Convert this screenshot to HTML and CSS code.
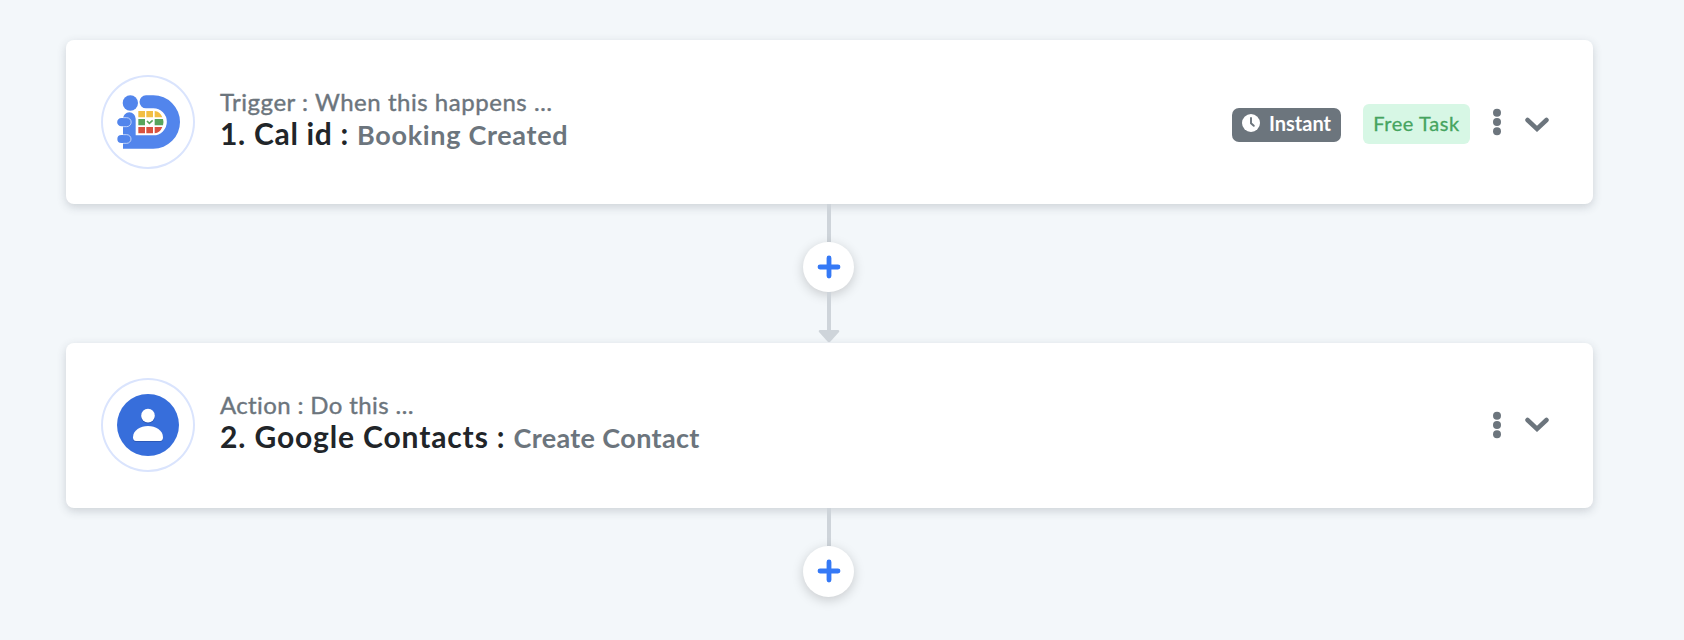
FILE: index.html
```html
<!DOCTYPE html>
<html lang="en">

<head>
    <meta charset="UTF-8">
    <meta name="viewport" content="width=device-width, initial-scale=1.0">
    <title>Workflow</title>
    <link rel="stylesheet" href="styles.css">
</head>

<body>
    <div class="flow">
        <div class="card">
            <div class="app_icon">
                <svg viewBox="33 29 282 282">
                    <path fill="#5285ec" d="M168 90H190A80 80 0 0 1 190 250H99V160A19 19 0 0 1 137 160V210H190A40 40 0 0 0 190 129H168A19.500 19.500 0 0 1 168 90Z" />
                    <circle fill="#5285ec" cx="121" cy="113" r="23" />
                    <g fill="#5285ec" stroke="#d5e1fb" stroke-width="2.500">
                        <path d="M99 157H110A13.500 13.500 0 0 1 110 184H99" />
                        <path d="M99 208H110A13 13 0 0 1 110 234H99" />
                    </g>
                    <path fill="#5285ec" d="M100 158H94A12.500 12.500 0 0 0 94 183H100ZM100 209H94A12 12 0 0 0 94 233H100Z" />
                    <path fill="#f2be42" d="M145 137H165V156H145ZM169 137H189V156H169ZM194 137Q210 138 217 156H194Z" />
                    <path fill="#58a55c" d="M145 161H165V180H145ZM194 161H219Q222 170 219 180H194Z" />
                    <path fill="#d95140" d="M145 185H165V204H145ZM169 185H189V204H169ZM194 185H217Q210 202 194 204Z" />
                    <path fill="none" stroke="#58a55c" stroke-width="5" d="M171 167L178 174L188 165" />
                </svg>
            </div>
            <div class="info">
                <div class="label">Trigger : When this happens …</div>
                <div class="title title_trigger"><b>1. Cal id :</b><span>Booking Created</span></div>
            </div>
            <div class="tools">
                <span class="badge badge_instant">
                    <svg width="18" height="18" viewBox="0 0 18 18">
                        <circle cx="9" cy="9" r="9" fill="#fff" />
                        <path d="M9 4V9.300L11.800 11.800" fill="none" stroke="#6c757d" stroke-width="1.900" stroke-linecap="round" />
                    </svg>
                    Instant
                </span>
                <span class="badge badge_free">Free Task</span>
                <svg class="dots" width="8" height="28" viewBox="0 0 8 28">
                    <circle cx="4" cy="4.800" r="4" />
                    <circle cx="4" cy="14" r="4" />
                    <circle cx="4" cy="23.200" r="4" />
                </svg>
                <svg class="chevron chevron_low" width="24" height="16" viewBox="0 0 24 16">
                    <path d="M2.500 3L12 12L21.500 3" />
                </svg>
            </div>
        </div>

        <div class="connector">
            <i class="line"></i>
            <button class="add">
                <svg width="24" height="24" viewBox="0 0 24 24"><path d="M12 3V21M3 12H21" /></svg>
            </button>
            <i class="line"></i>
            <svg class="arrow" width="22" height="13" viewBox="0 0 22 13">
                <path d="M1.500 0H20.500Q22 .8 21 2L12.500 11.400Q11 13 9.500 11.400L1 2Q0 .8 1.500 0Z" />
            </svg>
        </div>

        <div class="card">
            <div class="app_icon">
                <svg viewBox="33 24 282 282">
                    <circle fill="#376edb" cx="174" cy="165" r="93" />
                    <g fill="#2c59b8">
                        <circle cx="174" cy="140" r="21" />
                        <path d="M129 204C129 183 151 170 174 170S219 183 219 204Q219 216 210 216H138Q129 216 129 204Z" />
                    </g>
                    <g fill="#fff">
                        <circle cx="174" cy="137" r="20.500" />
                        <path d="M129 202C129 181 151 168 174 168S219 181 219 202Q219 213 210 213H138Q129 213 129 202Z" />
                    </g>
                </svg>
            </div>
            <div class="info">
                <div class="label label_action">Action : Do this …</div>
                <div class="title title_action"><b>2. Google Contacts :</b><span>Create Contact</span></div>
            </div>
            <div class="tools">
                <svg class="dots" width="8" height="28" viewBox="0 0 8 28">
                    <circle cx="4" cy="4.800" r="4" />
                    <circle cx="4" cy="14" r="4" />
                    <circle cx="4" cy="23.200" r="4" />
                </svg>
                <svg class="chevron" width="24" height="16" viewBox="0 0 24 16">
                    <path d="M2.500 3L12 12L21.500 3" />
                </svg>
            </div>
        </div>

        <div class="connector">
            <i class="line"></i>
            <button class="add">
                <svg width="24" height="24" viewBox="0 0 24 24"><path d="M12 3V21M3 12H21" /></svg>
            </button>
        </div>
    </div>
</body>

</html>
```
FILE: styles.css
```css
* {
    margin: 0;
    padding: 0;
    box-sizing: border-box;
}

body {
    height: 640px;
    overflow: hidden;
    background: #f3f7fa;
    font-family: Lato, "Open Sans", sans-serif;
    color: #212529;
}

svg {
    display: block;
    flex: none;
}

.flow {
    width: 1527px;
    margin-left: 66px;
    padding-top: 39.5px;
}

.card {
    display: flex;
    align-items: center;
    height: 164.5px;
    padding: 0 44px 0 35px;
    background: #fff;
    border-radius: 8px;
    box-shadow: 0 3px 10px rgba(50, 60, 75, 0.2);
}

.app_icon {
    width: 94px;
    height: 94px;
    border-radius: 50%;
    box-shadow: inset 0 0 0 2px #dae4fd;
}

.info {
    flex: 1;
    margin-left: 25px;
    padding-bottom: 6px;
    white-space: nowrap;
}

.label {
    font-size: 24px;
    line-height: 30px;
    letter-spacing: 0.53px;
    color: #6c757d;
    -webkit-text-stroke: 0.4px #6c757d;
}

.label_action {
    letter-spacing: 0.37px;
}

.title {
    display: flex;
    align-items: baseline;
    gap: 8px;
    line-height: 32px;
}

.title b {
    font-size: 30px;
    font-weight: 700;
    letter-spacing: 0.7px;
}

.title span {
    font-size: 27px;
    font-weight: 700;
    letter-spacing: 0.68px;
    color: #6c757d;
}

.title_action b {
    letter-spacing: 0.87px;
}

.title_action span {
    letter-spacing: 0.36px;
}

.tools {
    display: flex;
    align-items: center;
}

.badge {
    display: flex;
    align-items: center;
    justify-content: center;
    font-size: 20px;
    white-space: nowrap;
}

.badge_instant {
    width: 109px;
    height: 34px;
    gap: 9px;
    margin: 6px 22px 0 0;
    padding-bottom: 3px;
    border-radius: 7px;
    background: #6c757d;
    color: #fff;
    font-weight: 700;
}

.badge_free {
    width: 107px;
    height: 40px;
    margin: 4px 23px 0 0;
    padding-bottom: 1px;
    border-radius: 6px;
    background: #d7f7e5;
    color: #46a45f;
    letter-spacing: 0.58px;
    -webkit-text-stroke: 0.3px #46a45f;
}

.dots {
    fill: #6c757d;
}

.chevron {
    margin-left: 24px;
    fill: none;
    stroke: #6c757d;
    stroke-width: 4.5;
    stroke-linecap: round;
}

.chevron_low {
    margin-top: 7px;
}

.connector {
    display: flex;
    flex-direction: column;
    align-items: center;
    height: 139px;
    padding-right: 2px;
}

.line {
    width: 4px;
    height: 38px;
    background: #ced4da;
}

.add {
    display: flex;
    align-items: center;
    justify-content: center;
    width: 51px;
    height: 51px;
    border: 0;
    border-radius: 50%;
    background: #fff;
    box-shadow: 0 3px 12px rgba(0, 0, 0, 0.18);
}

.add svg {
    fill: none;
    stroke: #3579f6;
    stroke-width: 4.8;
    stroke-linecap: round;
}

.arrow {
    fill: #ced4da;
}
```
